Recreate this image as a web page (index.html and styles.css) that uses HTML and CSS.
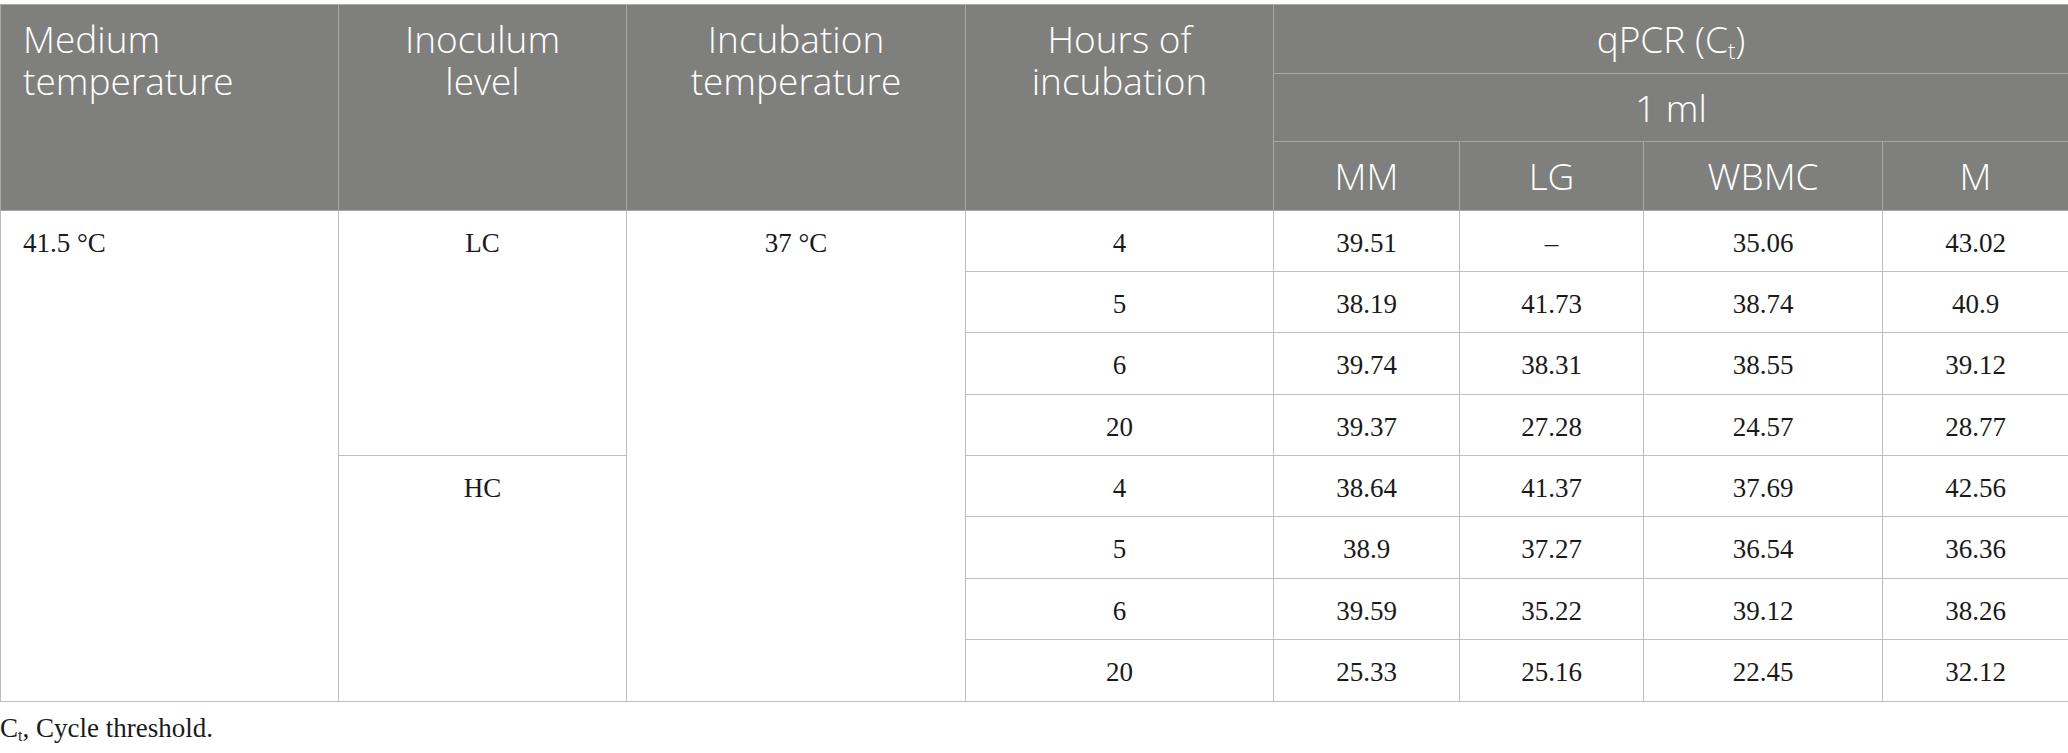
FILE: index.html
```html
<!DOCTYPE html>
<html lang="en">
<head>
<meta charset="utf-8">
<title>qPCR table</title>
<link rel="stylesheet" href="styles.css">
</head>
<body>
<div class="page">
  <table class="data">
    <colgroup>
      <col class="c1"><col class="c2"><col class="c3"><col class="c4">
      <col class="c5"><col class="c6"><col class="c7"><col class="c8">
    </colgroup>
    <thead>
      <tr class="hrow">
        <th rowspan="3" class="left">Medium temperature</th>
        <th rowspan="3" class="narrow">Inoculum level</th>
        <th rowspan="3">Incubation temperature</th>
        <th rowspan="3">Hours of incubation</th>
        <th colspan="4">qPCR (C<sub>t</sub>)</th>
      </tr>
      <tr class="hrow">
        <th colspan="4">1 ml</th>
      </tr>
      <tr class="hrow">
        <th>MM</th><th>LG</th><th>WBMC</th><th>M</th>
      </tr>
    </thead>
    <tbody>
      <tr class="brow">
        <td rowspan="8" class="left">41.5 °C</td>
        <td rowspan="4">LC</td>
        <td rowspan="8">37 °C</td>
        <td>4</td><td>39.51</td><td>–</td><td>35.06</td><td>43.02</td>
      </tr>
      <tr class="brow"><td>5</td><td>38.19</td><td>41.73</td><td>38.74</td><td>40.9</td></tr>
      <tr class="brow"><td>6</td><td>39.74</td><td>38.31</td><td>38.55</td><td>39.12</td></tr>
      <tr class="brow"><td>20</td><td>39.37</td><td>27.28</td><td>24.57</td><td>28.77</td></tr>
      <tr class="brow">
        <td rowspan="4">HC</td>
        <td>4</td><td>38.64</td><td>41.37</td><td>37.69</td><td>42.56</td>
      </tr>
      <tr class="brow"><td>5</td><td>38.9</td><td>37.27</td><td>36.54</td><td>36.36</td></tr>
      <tr class="brow"><td>6</td><td>39.59</td><td>35.22</td><td>39.12</td><td>38.26</td></tr>
      <tr class="brow"><td>20</td><td>25.33</td><td>25.16</td><td>22.45</td><td>32.12</td></tr>
    </tbody>
  </table>
  <p class="foot">C<sub>t</sub>, Cycle threshold.</p>
</div>
</body>
</html>
```

FILE: styles.css
```css
html, body {
  margin: 0;
  padding: 0;
  background: #ffffff;
}

.page {
  padding-top: 4px;
  width: 2068px;
}

.data {
  width: 2068px;
  table-layout: fixed;
  border-collapse: collapse;
  border: 1px solid #c4c4c4;
}

.c1 { width: 338px; }
.c2 { width: 288px; }
.c3 { width: 339px; }
.c4 { width: 308px; }
.c5 { width: 186px; }
.c6 { width: 184px; }
.c7 { width: 239px; }
.c8 { width: 186px; }

.data th {
  background: #7f807e;
  color: #ffffff;
  font-family: "Open Sans", "Noto Sans", sans-serif;
  font-weight: 300;
  font-size: 37px;
  line-height: 42px;
  text-align: center;
  vertical-align: top;
  padding: 13px 22px 0 22px;
  border: 1px solid #a8a9a7;
}

.data th.narrow {
  padding-left: 36px;
  padding-right: 36px;
}

.data th sub {
  font-size: 22px;
  line-height: 0;
  vertical-align: -6px;
}

.hrow { height: 68.5px; }

.data td {
  font-family: "Liberation Serif", "Times New Roman", serif;
  font-size: 27px;
  line-height: 31px;
  color: #1a1a1a;
  text-align: center;
  vertical-align: top;
  padding: 17px 22px 0 22px;
  border: 1px solid #bdbdbd;
}

.brow { height: 61.4px; }

.data .left { text-align: left; }

.foot {
  margin: 11px 0 0 0;
  font-family: "Liberation Serif", "Times New Roman", serif;
  font-size: 27px;
  line-height: 31px;
  color: #1a1a1a;
}

.foot sub {
  font-size: 16px;
  line-height: 0;
  vertical-align: -4px;
}
```
